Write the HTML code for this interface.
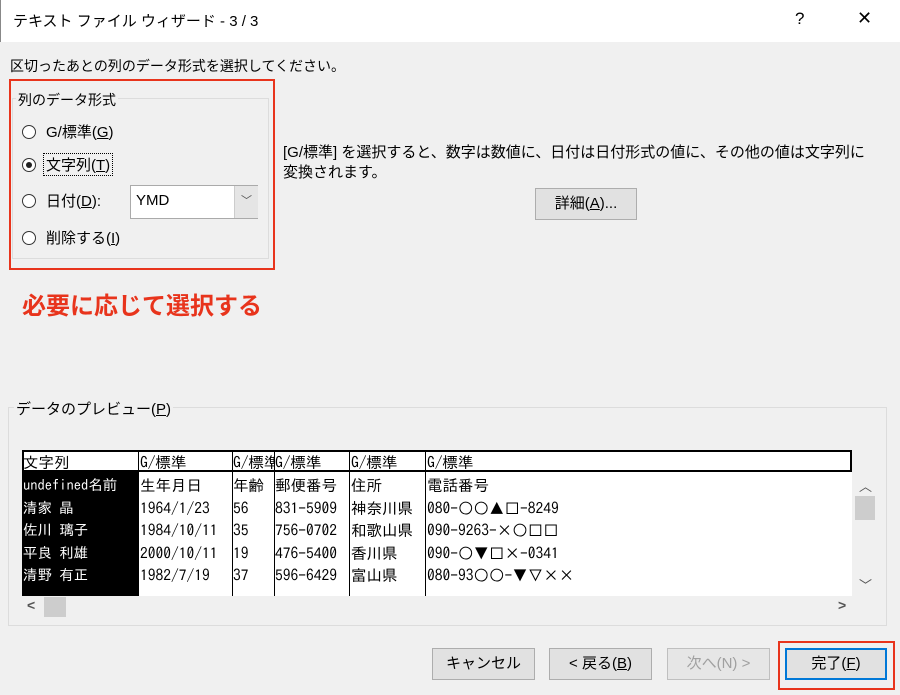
<!DOCTYPE html>
<html><head><meta charset="utf-8"><style>
body{margin:0;width:900px;height:695px;background:#f0f0f0;font-family:"Liberation Sans","Noto Sans CJK JP",sans-serif;font-size:14px;color:#000;position:relative;overflow:hidden}
.a{position:absolute;white-space:nowrap}
.rad{position:absolute;width:14px;height:14px;border:1px solid #333;border-radius:50%;background:#fff;box-sizing:border-box}
.btn{position:absolute;height:32px;border:1px solid #adadad;background:#e1e1e1;box-sizing:border-box;text-align:center;line-height:30px;font-size:15px}
.g{font-family:"IPAGothic","Noto Sans CJK JP",monospace;font-size:15.5px}
.vl{position:absolute;width:1px;background:#000}
</style></head><body>
<div class="a" style="left:0;top:0;width:900px;height:42px;background:#fff;border-left:1px solid #888"></div>
<div class="a" style="left:13px;top:10px;font-size:15px">テキスト ファイル ウィザード - 3 / 3</div>
<div class="a" style="left:795px;top:9px;font-size:17px">?</div>
<div class="a" style="left:857px;top:8px;font-size:18px">✕</div>
<div class="a" style="left:10px;top:56px">区切ったあとの列のデータ形式を選択してください。</div>
<div class="a" style="left:9px;top:79px;width:266px;height:191px;border:2px solid #e8341c;box-sizing:border-box"></div>
<div class="a" style="left:12px;top:98px;width:257px;height:161px;border:1px solid #dcdcdc;box-sizing:border-box"></div>
<div class="a" style="left:16px;top:90px;background:#f0f0f0;padding:0 2px">列のデータ形式</div>
<div class="rad" style="left:22px;top:125px"></div><div class="a" style="left:46px;top:121px;font-size:15px">G/標準(<u>G</u>)</div>
<div class="rad" style="left:22px;top:158px"></div><div class="a" style="left:26px;top:162px;width:6px;height:6px;border-radius:50%;background:#222"></div>
<div class="a" style="left:43px;top:153px;border:1px dotted #000;padding:0 2px;font-size:15px">文字列(<u>T</u>)</div>
<div class="rad" style="left:22px;top:194px"></div><div class="a" style="left:46px;top:190px;font-size:15px">日付(<u>D</u>):</div>
<div class="a" style="left:130px;top:185px;width:128px;height:34px;border:1px solid #aaa;background:#fff;box-sizing:border-box"></div>
<div class="a" style="left:136px;top:192px;font-size:15px">YMD</div>
<div class="a" style="left:234px;top:186px;width:23px;height:32px;background:#e5e5e5;border-left:1px solid #ccc;text-align:center;line-height:30px;color:#555;font-size:11px">﹀</div>
<div class="rad" style="left:22px;top:231px"></div><div class="a" style="left:46px;top:227px;font-size:15px">削除する(<u>I</u>)</div>
<div class="a" style="left:283px;top:141px;font-size:15px">[G/標準] を選択すると、数字は数値に、日付は日付形式の値に、その他の値は文字列に</div>
<div class="a" style="left:283px;top:161px;font-size:15px">変換されます。</div>
<div class="btn" style="left:535px;top:188px;width:102px">詳細(<u>A</u>)...</div>
<div class="a" style="left:22px;top:286px;font-size:24px;color:#e8341c;font-weight:bold">必要に応じて選択する</div>
<div class="a" style="left:8px;top:407px;width:879px;height:219px;border:1px solid #dcdcdc;box-sizing:border-box"></div>
<div class="a" style="left:14px;top:398px;background:#f0f0f0;padding:0 2px;font-size:15px">データのプレビュー(<u>P</u>)</div>
<div class="a" style="left:22px;top:450px;width:830px;height:146px;background:#fff"></div>
<div class="a" style="left:22px;top:450px;width:830px;height:22px;border:2px solid #000;box-sizing:border-box"></div>
<div class="a" style="left:22px;top:472px;width:116px;height:124px;background:#000"></div>
<div class="vl" style="left:138px;top:450px;height:146px"></div>
<div class="vl" style="left:232px;top:450px;height:146px"></div>
<div class="vl" style="left:274px;top:450px;height:146px"></div>
<div class="vl" style="left:349px;top:450px;height:146px"></div>
<div class="vl" style="left:425px;top:450px;height:146px"></div>
<div class="a g" style="left:23px;top:452px;line-height:21px">文字列</div>
<div class="a g" style="left:140px;top:452px;line-height:21px">G/標準</div>
<div class="a g" style="left:233px;top:452px;line-height:21px;width:41px;overflow:hidden">G/標準</div>
<div class="a g" style="left:275px;top:452px;line-height:21px">G/標準</div>
<div class="a g" style="left:351px;top:452px;line-height:21px">G/標準</div>
<div class="a g" style="left:427px;top:452px;line-height:21px">G/標準</div>
<div class="a g" style="left:23px;top:474px;line-height:22.5px;color:#fff;font-size:14.5px">undefined名前<br>清家 晶<br>佐川 璃子<br>平良 利雄<br>清野 有正</div>
<div class="a g" style="left:140px;top:474px;line-height:22.5px">生年月日<br>1964/1/23<br>1984/10/11<br>2000/10/11<br>1982/7/19</div>
<div class="a g" style="left:233px;top:474px;line-height:22.5px">年齢<br>56<br>35<br>19<br>37</div>
<div class="a g" style="left:275px;top:474px;line-height:22.5px">郵便番号<br>831-5909<br>756-0702<br>476-5400<br>596-6429</div>
<div class="a g" style="left:351px;top:474px;line-height:22.5px">住所<br>神奈川県<br>和歌山県<br>香川県<br>富山県</div>
<div class="a g" style="left:427px;top:474px;line-height:22.5px">電話番号<br>080-○○▲□-8249<br>090-9263-×○□□<br>090-○▼□×-0341<br>080-93○○-▼▽××</div>
<div class="a" style="left:855px;top:496px;width:20px;height:24px;background:#cdcdcd"></div>
<div class="a" style="left:859px;top:476px;font-size:13px;color:#555">︿</div>
<div class="a" style="left:859px;top:575px;font-size:13px;color:#555">﹀</div>
<div class="a" style="left:44px;top:597px;width:22px;height:20px;background:#cdcdcd"></div>
<div class="a" style="left:27px;top:597px;font-size:14px;color:#555;font-weight:bold">&lt;</div>
<div class="a" style="left:838px;top:597px;font-size:14px;color:#555;font-weight:bold">&gt;</div>
<div class="btn" style="left:432px;top:648px;width:103px">キャンセル</div>
<div class="btn" style="left:549px;top:648px;width:103px">&lt; 戻る(<u>B</u>)</div>
<div class="btn" style="left:667px;top:648px;width:103px;color:#a0a0a0;border-color:#bfbfbf;background:#e6e6e6">次へ(N) &gt;</div>
<div class="a" style="left:778px;top:641px;width:117px;height:49px;border:2px solid #e8341c;box-sizing:border-box"></div>
<div class="btn" style="left:785px;top:648px;width:102px;border:2px solid #0078d7;line-height:28px">完了(<u>F</u>)</div>
</body></html>
